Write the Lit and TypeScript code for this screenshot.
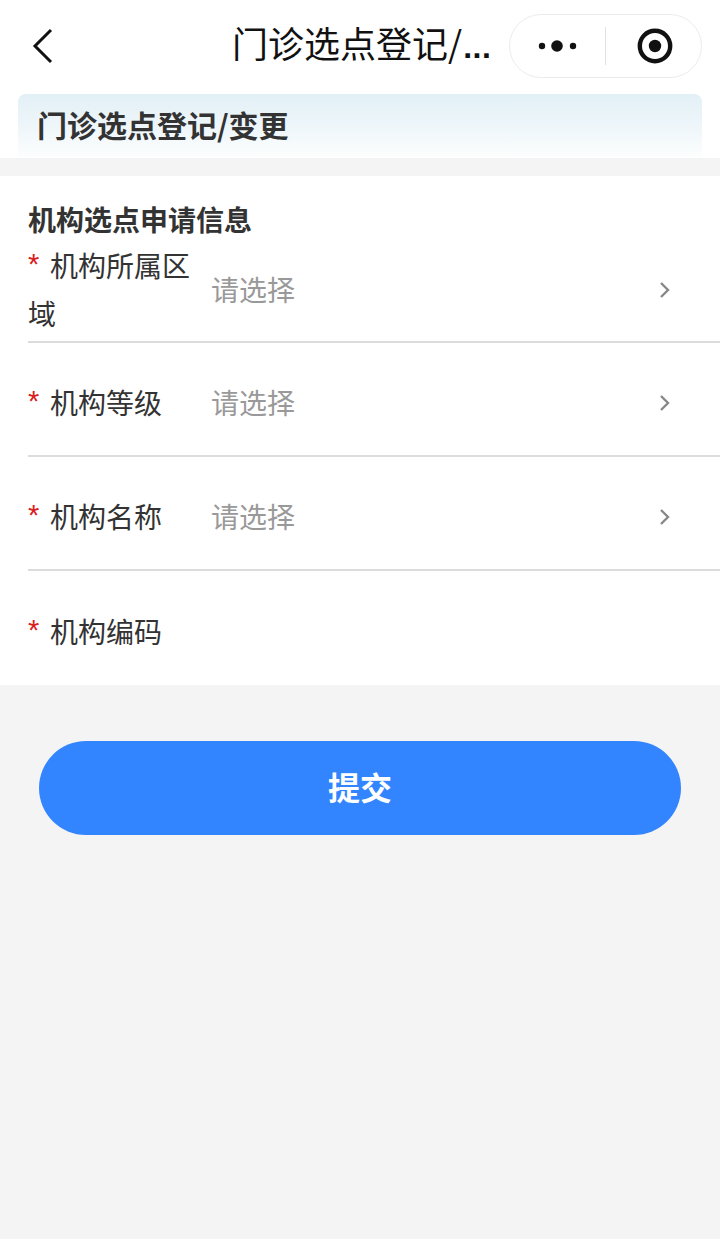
import { LitElement, html, css } from "lit";
import { customElement } from "lit/decorators.js";

const rows = [
  { label: "机构所属区域", select: true, cls: "first" },
  { label: "机构等级", select: true, cls: "" },
  { label: "机构名称", select: true, cls: "" },
  { label: "机构编码", select: false, cls: "last" },
];

@customElement("app-root")
export class AppRoot extends LitElement {
  static styles = css`
    :host {
      display: block;
      min-height: 1239px;
      background: #f4f4f4;
      font-family: "Noto Sans CJK SC", "Noto Sans", sans-serif;
      color: #333;
    }
    .top { background: #fff; height: 158px; }
    .nav { height: 94px; display: flex; align-items: center; position: relative; padding-left: 232px; box-sizing: border-box; }
    .back { position: absolute; left: 29px; top: 26px; width: 26px; height: 40px; }
    .nav-title {
      font-size: 36px; line-height: 50px; color: #111;
      white-space: nowrap; margin-top: -5px; letter-spacing: 0;
    }
    .dots { font-family: "Liberation Sans", sans-serif; font-size: 32px; font-weight: 700; letter-spacing: 0.6px; margin-left: 1px; }
    .capsule {
      position: absolute; left: 509px; top: 14px; width: 193px; height: 64px; box-sizing: border-box;
      border: 1px solid #ececec; border-radius: 32px; background: #fff;
      display: flex; align-items: center;
    }
    .capsule svg { display: block; }
    .banner {
      margin: 0 18px; height: 64px; border-radius: 8px 8px 0 0; box-sizing: border-box;
      background: linear-gradient(180deg, #e2f0f6 0%, #eef6fa 50%, #fdfefe 100%);
      padding-left: 19px; font-size: 30px; font-weight: 700; line-height: 60px; color: #333;
    }
    .form { margin-top: 18px; background: #fff; height: 509px; }
    .section { padding: 23px 0 0 28px; height: 64px; box-sizing: border-box; font-size: 28px; font-weight: 700; line-height: 40px; color: #333; }
    .row {
      margin-left: 28px; display: flex; align-items: center; box-sizing: border-box;
      height: 114px; padding-top: 6px; border-bottom: 2px solid #dcdcdc;
    }
    .row.first { height: 102px; padding-top: 0; padding-bottom: 4px; margin-top: 1px; }
    .row.last { border-bottom: none; height: 114px; padding-top: 6px; }
    .label { width: 168px; margin-right: 16px; font-size: 28px; line-height: 48px; color: #333; flex: none; }
    .star {
      color: #d81e1e; font-family: "Liberation Sans", sans-serif; font-size: 29px; line-height: 1;
      display: inline-block; width: 22px; vertical-align: 3px; height: 20px;
    }
    .value { flex: 1; font-size: 28px; line-height: 48px; color: #999; margin-left: -1px; }
    .chev { width: 12px; height: 18px; margin: 2px 49px 0 0; flex: none; }
    .btn-wrap { padding: 56px 39px 0; }
    .btn {
      display: block; width: 100%; height: 94px; border: none; border-radius: 47px; background: #3385ff;
      color: #fff; font: 700 32px/90px "Noto Sans CJK SC", sans-serif; padding: 0 0 4px; text-align: center;
    }
  `;

  render() {
    return html`
      <div class="top">
        <div class="nav">
          <svg class="back" viewBox="0 0 26 40" fill="none" stroke="#111" stroke-width="3">
            <path d="M22 4 L6 20 L22 36"/>
          </svg>
          <div class="nav-title">门诊选点登记/<span class="dots">...</span></div>
          <div class="capsule">
            <svg width="191" height="62" viewBox="0 0 191 62">
              <circle cx="32" cy="31" r="3.2" fill="#111"/>
              <circle cx="47" cy="31" r="5.8" fill="#111"/>
              <circle cx="63" cy="31" r="3.2" fill="#111"/>
              <rect x="95" y="12" width="1" height="38" fill="#e2e2e2"/>
              <circle cx="145" cy="31" r="15.2" fill="none" stroke="#111" stroke-width="4.4"/>
              <circle cx="145" cy="31" r="6.2" fill="#111"/>
            </svg>
          </div>
        </div>
        <div class="banner">门诊选点登记/变更</div>
      </div>
      <div class="form">
        <div class="section">机构选点申请信息</div>
        ${rows.map(
          (r) => html`
            <div class="row ${r.cls}">
              <div class="label"><span class="star">*</span>${r.label}</div>
              ${r.select
                ? html`<div class="value">请选择</div>
                    <svg class="chev" viewBox="0 0 12 18" fill="none" stroke="#888" stroke-width="2.4">
                      <path d="M2 2 L9 9 L2 16"/>
                    </svg>`
                : ""}
            </div>
          `
        )}
      </div>
      <div class="btn-wrap"><button class="btn">提交</button></div>
    `;
  }
}
